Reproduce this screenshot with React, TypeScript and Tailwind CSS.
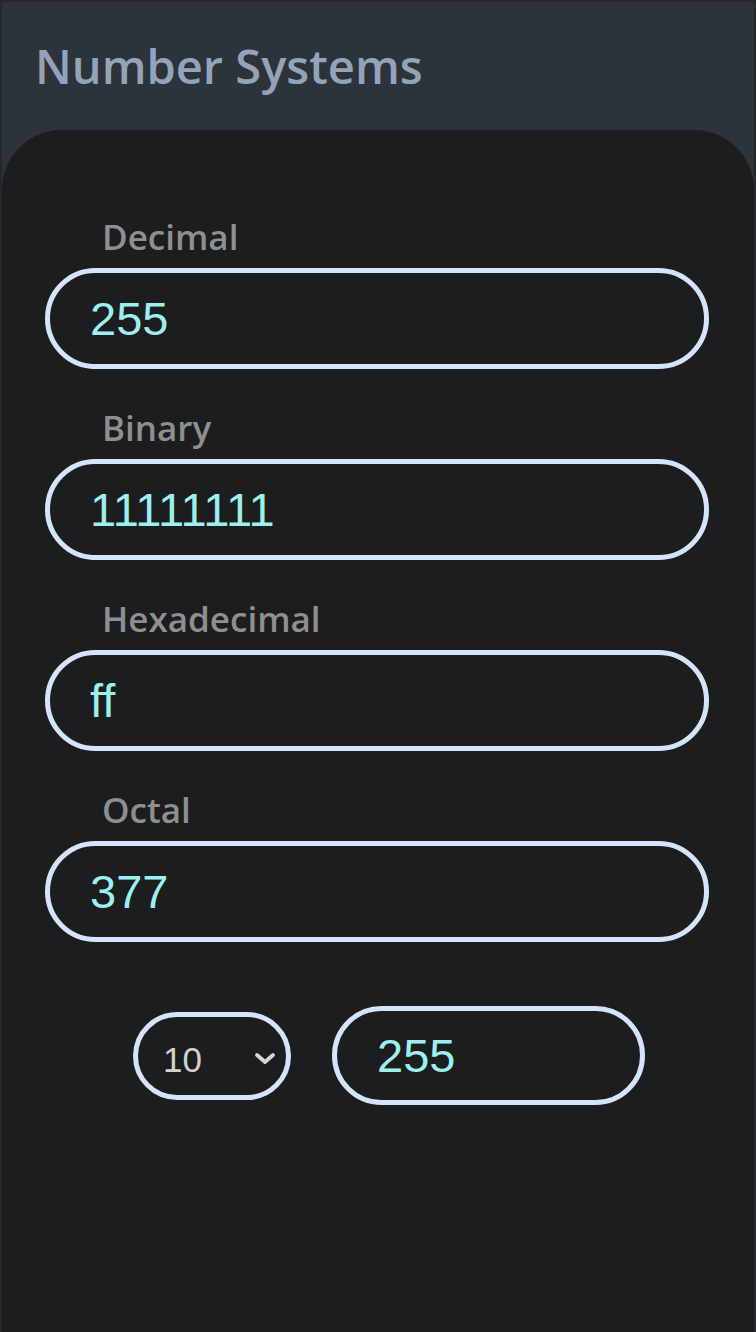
import React, { useState } from "react";

const fields = [
  { label: "Decimal", value: "255" },
  { label: "Binary", value: "11111111" },
  { label: "Hexadecimal", value: "ff" },
  { label: "Octal", value: "377" },
];

export default function App() {
  const [base, setBase] = useState("10");
  const [val, setVal] = useState("255");
  return (
    <div className="min-h-[1332px] bg-[#2c333b] border-2 border-b-0 border-[#25272b] flex flex-col">
      <header className="h-[128px] pl-[33px] pt-[40px]">
        <h1
          className="text-[47px] leading-[48px] font-semibold text-[#95a3b8]"
          style={{ fontFamily: "'Open Sans', Lato, sans-serif" }}
        >
          Number Systems
        </h1>
      </header>
      <main className="flex-1 bg-[#1c1d1f] rounded-t-[60px] pt-[90px] px-[43px]">
        {fields.map((f, i) => (
          <div key={f.label} className={i > 0 ? "mt-[42px]" : ""}>
            <label
              className="block pl-[57px] text-[35px] leading-[34px] font-semibold text-[#8f8f8f]"
              style={{ fontFamily: "'Open Sans', Lato, sans-serif" }}
            >
              {f.label}
            </label>
            <input
              readOnly
              value={f.value}
              className="mt-[14px] block w-[664px] h-[101px] rounded-full border-[5px] border-[#d4e5fb] bg-transparent pl-[40px] text-[47px] text-[#9ef0ef] outline-none"
              style={{ fontFamily: "'Liberation Sans', Arial, sans-serif" }}
            />
          </div>
        ))}
        <div className="mt-[64px] flex items-center ml-[88px] gap-[41px]">
          <div className="relative w-[158px] h-[88px]">
            <select
              value={base}
              onChange={(e) => setBase(e.target.value)}
              className="appearance-none w-full h-full rounded-full border-[5px] border-[#d4e5fb] bg-transparent pl-[25px] pt-[9px] text-[35px] text-[#d2d2d2] outline-none"
              style={{ fontFamily: "'Liberation Sans', Arial, sans-serif" }}
            >
              <option value="2">2</option>
              <option value="8">8</option>
              <option value="10">10</option>
              <option value="16">16</option>
            </select>
            <svg
              className="pointer-events-none absolute left-[121px] top-[39px]"
              width="22"
              height="15"
              viewBox="0 0 22 15"
              fill="none"
            >
              <path d="M3 4 L11 11 L19 4" stroke="#d6d6d6" strokeWidth="3.8" strokeLinecap="round" strokeLinejoin="round" />
            </svg>
          </div>
          <input
            value={val}
            onChange={(e) => setVal(e.target.value)}
            className="block w-[313px] h-[99px] rounded-full border-[5px] border-[#d4e5fb] bg-transparent pl-[40px] text-[47px] text-[#9ef0ef] outline-none"
            style={{ fontFamily: "'Liberation Sans', Arial, sans-serif" }}
          />
        </div>
      </main>
    </div>
  );
}
